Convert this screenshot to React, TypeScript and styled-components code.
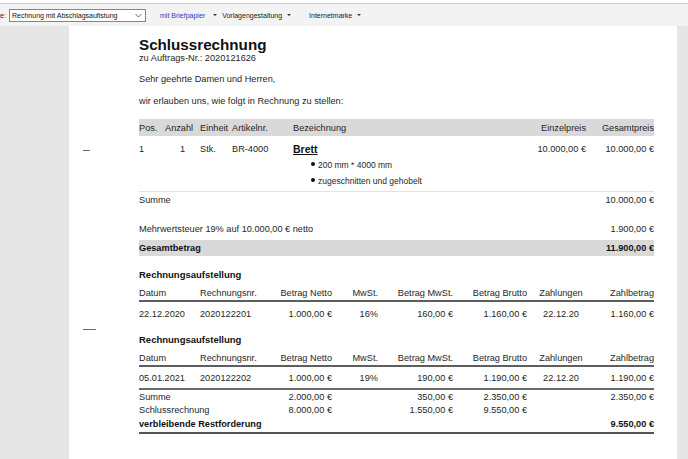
import React from 'react';
import styled, { createGlobalStyle } from 'styled-components';

interface Statement {
  date: string;
  number: string;
  net: string;
  rate: string;
  tax: string;
  gross: string;
  paidOn: string;
  paid: string;
}

const statements: Statement[] = [
  {
    date: '22.12.2020',
    number: '2020122201',
    net: '1.000,00 €',
    rate: '16%',
    tax: '160,00 €',
    gross: '1.160,00 €',
    paidOn: '22.12.20',
    paid: '1.160,00 €',
  },
  {
    date: '05.01.2021',
    number: '2020122202',
    net: '1.000,00 €',
    rate: '19%',
    tax: '190,00 €',
    gross: '1.190,00 €',
    paidOn: '22.12.20',
    paid: '1.190,00 €',
  },
];

const StatementHead = () => (
  <StatementHeader>
    <Cell>Datum</Cell>
    <Cell>Rechnungsnr.</Cell>
    <Cell $align="right">Betrag Netto</Cell>
    <Cell $align="right">MwSt.</Cell>
    <Cell $align="right">Betrag MwSt.</Cell>
    <Cell $align="right">Betrag Brutto</Cell>
    <Cell $align="center">Zahlungen</Cell>
    <Cell $align="right">Zahlbetrag</Cell>
  </StatementHeader>
);

const StatementLine = ({ row, closing }: { row: Statement; closing?: boolean }) => (
  <StatementRow $closing={closing}>
    <Cell>{row.date}</Cell>
    <Cell>{row.number}</Cell>
    <Cell $align="right">{row.net}</Cell>
    <Cell $align="right">{row.rate}</Cell>
    <Cell $align="right">{row.tax}</Cell>
    <Cell $align="right">{row.gross}</Cell>
    <Cell $align="center">{row.paidOn}</Cell>
    <Cell $align="right">{row.paid}</Cell>
  </StatementRow>
);

const App: React.FC = () => {
  return (
    <Screen>
      <GlobalStyle />
      <Toolbar>
        <Label>e:</Label>
        <Select>
          <span>Rechnung mit Abschlagsaufistung</span>
          <svg width="7" height="5" viewBox="0 0 7 5">
            <polyline points="0.5,1 3.5,4 6.5,1" fill="none" stroke="#555" strokeWidth="0.9" />
          </svg>
        </Select>
        <LinkButton>mit Briefpapier</LinkButton>
        <MenuButton $gap={8}>
          <Caret $side="right" />
          Vorlagengestaltung
          <Caret $side="left" />
        </MenuButton>
        <MenuButton $gap={18}>
          Internetmarke
          <Caret $side="left" />
        </MenuButton>
      </Toolbar>

      <Workspace>
        <Sheet>
          <FoldMark $top={124} $width={7} />
          <FoldMark $top={303} $width={13} />

          <Title>Schlussrechnung</Title>
          <Line>zu Auftrags-Nr.: 2020121626</Line>
          <Line $space={10}>Sehr geehrte Damen und Herren,</Line>
          <Line $space={11}>wir erlauben uns, wie folgt in Rechnung zu stellen:</Line>

          <PositionHeader>
            <Cell>Pos.</Cell>
            <Cell>Anzahl</Cell>
            <Cell>Einheit</Cell>
            <Cell>Artikelnr.</Cell>
            <Cell>Bezeichnung</Cell>
            <Cell $align="right">Einzelpreis</Cell>
            <Cell $align="right">Gesamtpreis</Cell>
          </PositionHeader>
          <PositionRow>
            <Cell>1</Cell>
            <Cell $align="center">1</Cell>
            <Cell>Stk.</Cell>
            <Cell>BR-4000</Cell>
            <Cell>
              <ArticleName>Brett</ArticleName>
              <BulletList>
                <li>200 mm * 4000 mm</li>
                <li>zugeschnitten und gehobelt</li>
              </BulletList>
            </Cell>
            <Cell $align="right">10.000,00 €</Cell>
            <Cell $align="right">10.000,00 €</Cell>
          </PositionRow>

          <TotalRow>
            <span>Summe</span>
            <span>10.000,00 €</span>
          </TotalRow>
          <TotalRow $space={13}>
            <span>Mehrwertsteuer 19% auf 10.000,00 € netto</span>
            <span>1.900,00 €</span>
          </TotalRow>
          <TotalRow $space={3} $band>
            <span>Gesamtbetrag</span>
            <span>11.900,00 €</span>
          </TotalRow>

          <Section $space={11}>
            <SectionTitle>Rechnungsaufstellung</SectionTitle>
            <StatementHead />
            <StatementLine row={statements[0]} />
          </Section>

          <Section $space={10}>
            <SectionTitle>Rechnungsaufstellung</SectionTitle>
            <StatementHead />
            <StatementLine row={statements[1]} closing />
            <SummaryRow>
              <Cell $span={2}>Summe</Cell>
              <Cell $align="right">2.000,00 €</Cell>
              <Cell />
              <Cell $align="right">350,00 €</Cell>
              <Cell $align="right">2.350,00 €</Cell>
              <Cell />
              <Cell $align="right">2.350,00 €</Cell>
            </SummaryRow>
            <SummaryRow>
              <Cell $span={2}>Schlussrechnung</Cell>
              <Cell $align="right">8.000,00 €</Cell>
              <Cell />
              <Cell $align="right">1.550,00 €</Cell>
              <Cell $align="right">9.550,00 €</Cell>
            </SummaryRow>
            <SummaryRow $final>
              <Cell $span={7}>verbleibende Restforderung</Cell>
              <Cell $align="right">9.550,00 €</Cell>
            </SummaryRow>
          </Section>
        </Sheet>
      </Workspace>
    </Screen>
  );
};

export default App;

// Styled components
const GlobalStyle = createGlobalStyle`
  html, body {
    margin: 0;
    padding: 0;
  }
  body {
    font-family: "Liberation Sans", Arial, sans-serif;
    background: #fff;
  }
`;

const Screen = styled.div`
  width: 688px;
  height: 459px;
  overflow: hidden;
  display: flex;
  flex-direction: column;
`;

const Toolbar = styled.div`
  margin-top: 3px;
  border-top: 1px solid #cdcdcd;
  height: 22px;
  background: #f3f3f3;
  display: flex;
  align-items: center;
  font-size: 7px;
  color: #222;
  white-space: nowrap;
`;

const Label = styled.span`
  width: 6px;
`;

const Select = styled.div`
  box-sizing: border-box;
  margin-left: 3px;
  width: 137px;
  height: 13px;
  padding: 0 3px 0 2px;
  border: 1px solid #858585;
  background: #fff;
  display: flex;
  align-items: center;
  justify-content: space-between;
  color: #111;
`;

const LinkButton = styled.span`
  margin-left: 14px;
  color: #3434c8;
`;

const MenuButton = styled.span<{ $gap: number }>`
  margin-left: ${(p) => p.$gap}px;
  display: inline-flex;
  align-items: center;
  color: #222;
`;

const Caret = styled.span<{ $side: 'left' | 'right' }>`
  display: inline-block;
  width: 0;
  height: 0;
  border-left: 2px solid transparent;
  border-right: 2px solid transparent;
  border-top: 2.5px solid #333;
  ${(p) => (p.$side === 'left' ? 'margin-left: 5px;' : 'margin-right: 5px;')}
`;

const Workspace = styled.div`
  flex: 1;
  background: #e6e6e6;
  display: flex;
`;

const Sheet = styled.div`
  position: relative;
  box-sizing: border-box;
  margin-left: 69px;
  width: 608px;
  padding: 11px 23px 0 70px;
  background: #fff;
  color: #262626;
  font-size: 9.2px;
`;

const FoldMark = styled.div<{ $top: number; $width: number }>`
  position: absolute;
  left: 14px;
  top: ${(p) => p.$top}px;
  width: ${(p) => p.$width}px;
  height: 1px;
  background: #6a6a6a;
`;

const Title = styled.h1`
  margin: 0;
  font-size: 15.2px;
  line-height: 16px;
  font-weight: bold;
  color: #111;
`;

const Line = styled.p<{ $space?: number }>`
  margin: ${(p) => p.$space ?? 0}px 0 0;
  line-height: 11px;
`;

const Cell = styled.div<{ $align?: 'left' | 'right' | 'center'; $span?: number }>`
  text-align: ${(p) => p.$align ?? 'left'};
  white-space: nowrap;
  ${(p) => (p.$span ? `grid-column: span ${p.$span};` : '')}
`;

const positionColumns = '26px 35px 32px 61px 1fr 80px 68px';

const PositionHeader = styled.div`
  margin-top: 12px;
  height: 17px;
  display: grid;
  grid-template-columns: ${positionColumns};
  align-items: center;
  background: #d9d9d9;
`;

const PositionRow = styled.div`
  display: grid;
  grid-template-columns: ${positionColumns};
  align-items: start;
  padding: 7px 0 2px;
  line-height: 12px;
  border-bottom: 1px solid #e3e3e3;
`;

const ArticleName = styled.div`
  font-size: 10.5px;
  font-weight: bold;
  text-decoration: underline;
  color: #111;
`;

const BulletList = styled.ul`
  list-style: none;
  margin: 2px 0 0;
  padding: 0 0 0 25px;
  font-size: 8.5px;

  li {
    position: relative;
    line-height: 16px;
  }

  li::before {
    content: '';
    position: absolute;
    left: -7px;
    top: 5px;
    width: 4px;
    height: 4px;
    border-radius: 50%;
    background: #111;
  }
`;

const TotalRow = styled.div<{ $space?: number; $band?: boolean }>`
  margin-top: ${(p) => p.$space ?? 0}px;
  height: 16px;
  display: flex;
  align-items: center;
  justify-content: space-between;
  background: ${(p) => (p.$band ? '#d9d9d9' : 'transparent')};
  font-weight: ${(p) => (p.$band ? 'bold' : 'normal')};
  color: ${(p) => (p.$band ? '#111' : 'inherit')};
`;

const Section = styled.section<{ $space: number }>`
  margin-top: ${(p) => p.$space}px;
`;

const SectionTitle = styled.h2`
  margin: 0;
  font-size: 9.5px;
  line-height: 16px;
  font-weight: bold;
  color: #111;
`;

const statementColumns = '61px 61px 71px 46px 75px 74px 68px 1fr';

const StatementHeader = styled.div`
  margin-top: 3px;
  height: 14px;
  display: grid;
  grid-template-columns: ${statementColumns};
  align-items: center;
  border-bottom: 2px solid #5e5e5e;
`;

const StatementRow = styled.div<{ $closing?: boolean }>`
  display: grid;
  grid-template-columns: ${statementColumns};
  align-items: center;
  height: 16px;
  padding: ${(p) => (p.$closing ? '3px 0 2px' : '4px 0 0')};
  border-bottom: ${(p) => (p.$closing ? '2px solid #6a6a6a' : 'none')};
`;

const SummaryRow = styled.div<{ $final?: boolean }>`
  display: grid;
  grid-template-columns: ${statementColumns};
  align-items: center;
  height: ${(p) => (p.$final ? 16 : 13)}px;
  font-weight: ${(p) => (p.$final ? 'bold' : 'normal')};
  color: ${(p) => (p.$final ? '#111' : 'inherit')};
  border-bottom: ${(p) => (p.$final ? '2px solid #555' : 'none')};
`;
